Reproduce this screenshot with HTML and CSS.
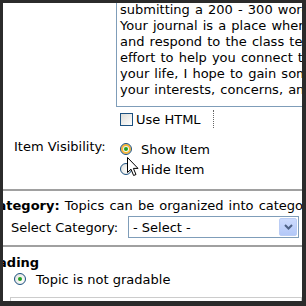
FILE: index.html
```html
<!DOCTYPE html>
<html lang="en">
<head>
  <meta charset="UTF-8">
  <title>Edit Topic</title>
  <link rel="stylesheet" href="styles.css">
</head>
<body>
  <div class="frame">

    <!-- Description editor -->
    <div class="editor">
      <div class="textarea">
        <div>submitting a 200 - 300 word entry each week.</div>
        <div>Your journal is a place where you can reflect on</div>
        <div>and respond to the class texts and discussions, in an</div>
        <div>effort to help you connect the course material to</div>
        <div>your life, I hope to gain some insight into</div>
        <div>your interests, concerns, and questions.</div>
      </div>
    </div>
    <div class="html-row">
      <label class="html-cell"><span class="checkbox"></span>Use HTML</label>
    </div>

    <!-- Visibility -->
    <div class="vis-row">
      <div class="vis-label">Item Visibility:</div>
      <div class="vis-options">
        <label class="option"><span class="radio hover checked"></span>Show Item</label>
        <label class="option"><span class="radio"></span>Hide Item</label>
      </div>
      <svg class="cursor" width="13" height="20" viewBox="0 0 13 20">
        <path d="M0.5 0.5 L0.5 15.5 L4 12.2 L6.6 18.5 L9 17.5 L6.4 11.4 L11 11.4 Z" fill="#fff" stroke="#000" stroke-width="1"/>
      </svg>
    </div>

    <hr class="rule">

    <!-- Category -->
    <div class="section">
      <div class="section-title"><b>Category:</b> Topics can be organized into categories.</div>
      <div class="select-row">
        <span class="select-label">Select Category:</span>
        <div class="select">
          <span>- Select -</span>
          <span class="select-btn">
            <svg width="9" height="6" viewBox="0 0 9 6"><path d="M1 1 L4.5 4.5 L8 1" fill="none" stroke="#4d6185" stroke-width="2"/></svg>
          </span>
        </div>
      </div>
    </div>

    <hr class="rule second">

    <!-- Grading -->
    <div class="section">
      <div class="section-title grading"><b>Grading</b></div>
      <label class="option grade"><span class="radio checked"></span>Topic is not gradable</label>
      <div class="grade-box"></div>
    </div>

  </div>
</body>
</html>
```

FILE: styles.css
```css
body { margin: 0; background: #2b2b2b; font-family: "DejaVu Sans", Verdana, sans-serif; font-size: 13px; color: #000; }
.frame { position: relative; margin: 3px 4px 5px 3px; height: 298px; background: #fff; overflow: hidden; }

.editor { margin: -7px 0 0 113px; }
.textarea { width: 320px; padding: 5px 4px 8px 3px; border: 1px solid #7f9db9; line-height: 16px; white-space: nowrap; word-spacing: 1px; overflow: hidden; }

.html-row { margin-left: 113px; padding-top: 3px; height: 20px; }
.html-cell { display: flex; align-items: center; width: 93px; height: 18px; padding-left: 4px; border-right: 1px dotted #666; }
.checkbox { width: 11px; height: 11px; margin-right: 3px; border: 1px solid #1c5180; background: linear-gradient(135deg, #dcdcd7, #fff); }

.vis-row { position: relative; display: flex; margin-top: 9px; }
.vis-label { width: 102px; padding-left: 11px; line-height: 16px; }
.vis-options { padding-left: 4px; }
.option { display: flex; align-items: center; height: 20px; }
.radio { position: relative; width: 10px; height: 10px; margin-right: 9px; border: 1px solid #1c5180; border-radius: 50%; background: radial-gradient(circle at 65% 65%, #fff, #dcdcd7); }
.radio.hover { box-shadow: inset 0 0 0 2px #f8b636; }
.radio.checked::after { content: ""; position: absolute; left: 3px; top: 3px; width: 4px; height: 4px; border-radius: 50%; background: #21a121; }
.cursor { position: absolute; left: 124px; top: 18px; }

.rule { margin: 10px 0 0; height: 2px; border: 0; background: #a0a0a0; }
.rule.second { margin-top: 7px; }

.section-title { margin: 7px 0 0 -15px; line-height: 16px; white-space: nowrap; word-spacing: 1px; }
.section-title.grading { margin: 8px 0 0 -22px; }
.select-row { display: flex; align-items: center; margin-top: 2px; }
.select-label { width: 117px; padding-left: 8px; }
.select { display: flex; align-items: center; justify-content: space-between; width: 164px; height: 20px; padding: 0 1px 0 4px; border: 1px solid #7f9db9; }
.select-btn { display: flex; align-items: center; justify-content: center; width: 16px; height: 16px; border: 1px solid #bbcdf5; border-radius: 2px; background: linear-gradient(#cddbfd, #b3c8f8); }

.option.grade { height: 18px; margin-top: -1px; padding-left: 11px; }
.option.grade .radio { margin-right: 10px; }
.grade-box { margin: 9px 0 0 7px; height: 20px; border: 1px solid #ccc; }
```
